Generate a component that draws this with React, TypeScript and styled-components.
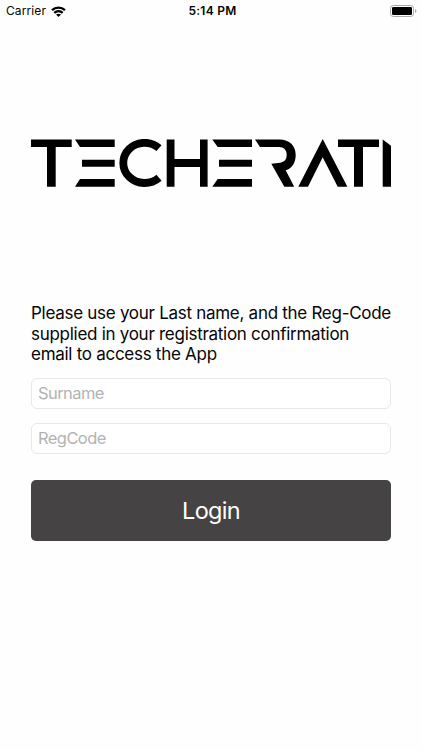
import React from "react";
import styled, { createGlobalStyle } from "styled-components";

const GlobalStyle = createGlobalStyle`
  * { box-sizing: border-box; }
  body { margin: 0; background: #fefefe; }
`;

const Screen = styled.main`
  display: flex;
  flex-direction: column;
  width: 422px;
  height: 750px;
  background: #fefefe;
  color: #050505;
  font-family: Inter, "Liberation Sans", sans-serif;
`;

const StatusBar = styled.header`
  display: grid;
  grid-template-columns: 1fr auto 1fr;
  align-items: center;
  height: 22px;
  padding: 0 5px 0 6px;
  font-size: 12px;
  line-height: 22px;
`;

const Carrier = styled.div`
  display: flex;
  align-items: center;
  gap: 5px;
  letter-spacing: 0.1px;
`;

const Clock = styled.time`
  padding-left: 2px;
  font-weight: 600;
  letter-spacing: 0.25px;
`;

const BatterySlot = styled.div`
  display: flex;
  justify-content: flex-end;
`;

const LogoArea = styled.div`
  padding: 117px 31px 0;
  height: 281px;

  svg { display: block; }
`;

const Form = styled.form`
  display: flex;
  flex-direction: column;
  padding: 0 31px;
`;

const Instructions = styled.p`
  margin: 0 0 13px;
  font-size: 17px;
  line-height: 20.6px;
  letter-spacing: -0.28px;
  white-space: nowrap;
`;

const Field = styled.input`
  height: 31px;
  margin: 0 0 14px;
  padding: 0 6px;
  border: 1px solid #e9e9e9;
  border-radius: 6px;
  background: #fff;
  font: 16.5px Inter, "Liberation Sans", sans-serif;
  letter-spacing: -0.58px;
  outline: none;

  &::placeholder { color: #b3b3b3; opacity: 1; }
`;

const LoginButton = styled.button`
  height: 61px;
  margin: 12px 0 0;
  padding: 1px 0 0;
  border: 0;
  border-radius: 5px;
  background: #464344;
  color: #fff;
  font: 23.5px/60px Inter, "Liberation Sans", sans-serif;
  letter-spacing: -0.7px;
`;

const WifiIcon = () => (
  <svg width="15" height="11" viewBox="0 0 15 11" fill="none" stroke="#000" strokeWidth="2.3">
    <path d="M1 4.2C4.7 .7 10.3 .7 14 4.2" />
    <path d="M3.3 6.9C5.7 4.7 9.3 4.7 11.7 6.9" />
    <path d="M5 8.6Q7.5 6.7 10 8.6L7.5 10.9Z" fill="#000" stroke="none" />
  </svg>
);

const BatteryIcon = () => (
  <svg width="27" height="12" viewBox="0 0 27 12">
    <rect x=".5" y=".5" width="23" height="11" rx="2.8" fill="#fff" stroke="#aaa" />
    <rect x="2" y="2" width="20" height="8" rx="1.2" />
    <path d="M25 4V8Q26.5 7.3 26.5 6T25 4Z" fill="#aaa" />
  </svg>
);

const Logo = () => (
  <svg width="360" height="48" viewBox="31 139 360 48" role="img" aria-label="Techerati">
    <path d="M31 139.4H71.7V147H55.7V186.7H47V147H31Z" />
    <path d="M75 139.4H114.7V147H80Z M82 159.7H114.7V166.8H82Z M80 179H114.7V186.7H75Z" />
    <path d="M159 148.1A21.3 20.1 0 1 0 159 177.7" fill="none" stroke="#000" strokeWidth="7.8" />
    <path d="M166.7 139.4H174.5V159H200V139.4H207.6V186.7H200V167H174.5V186.7H166.7Z" />
    <path d="M212.3 139.4H252V147H217.7Z M219 159.7H252V166.8H219Z M217.7 179H252V186.7H212.3Z" />
    <path d="M255 139.4H279.5C289.5 139.4 295.7 145.8 295.7 155C295.7 162.5 292 168.5 285.7 170.3L294.2 186.7H284.3L271.3 163.7L278 163C284 162.5 286.7 160 286.7 154.7C286.7 150 283.7 147 279 147H260Z" />
    <path d="M322.7 139L347.4 186.7H337.7L322.7 157.3L308 186.7H298.3Z" />
    <path d="M338 139.4H379V147H363V186.7H354V147H338Z" />
    <path d="M382.7 139.4L391 145.7V186.7H382.7Z" />
  </svg>
);

export default function App() {
  return (
    <>
      <GlobalStyle />
      <Screen>
        <StatusBar>
          <Carrier>Carrier <WifiIcon /></Carrier>
          <Clock>5:14 PM</Clock>
          <BatterySlot><BatteryIcon /></BatterySlot>
        </StatusBar>
        <LogoArea><Logo /></LogoArea>
        <Form onSubmit={(event) => event.preventDefault()}>
          <Instructions>
            Please use your Last name, and the Reg-Code<br />
            supplied in your registration confirmation<br />
            email to access the App
          </Instructions>
          <Field placeholder="Surname" aria-label="Surname" />
          <Field placeholder="RegCode" aria-label="RegCode" />
          <LoginButton type="submit">Login</LoginButton>
        </Form>
      </Screen>
    </>
  );
}
